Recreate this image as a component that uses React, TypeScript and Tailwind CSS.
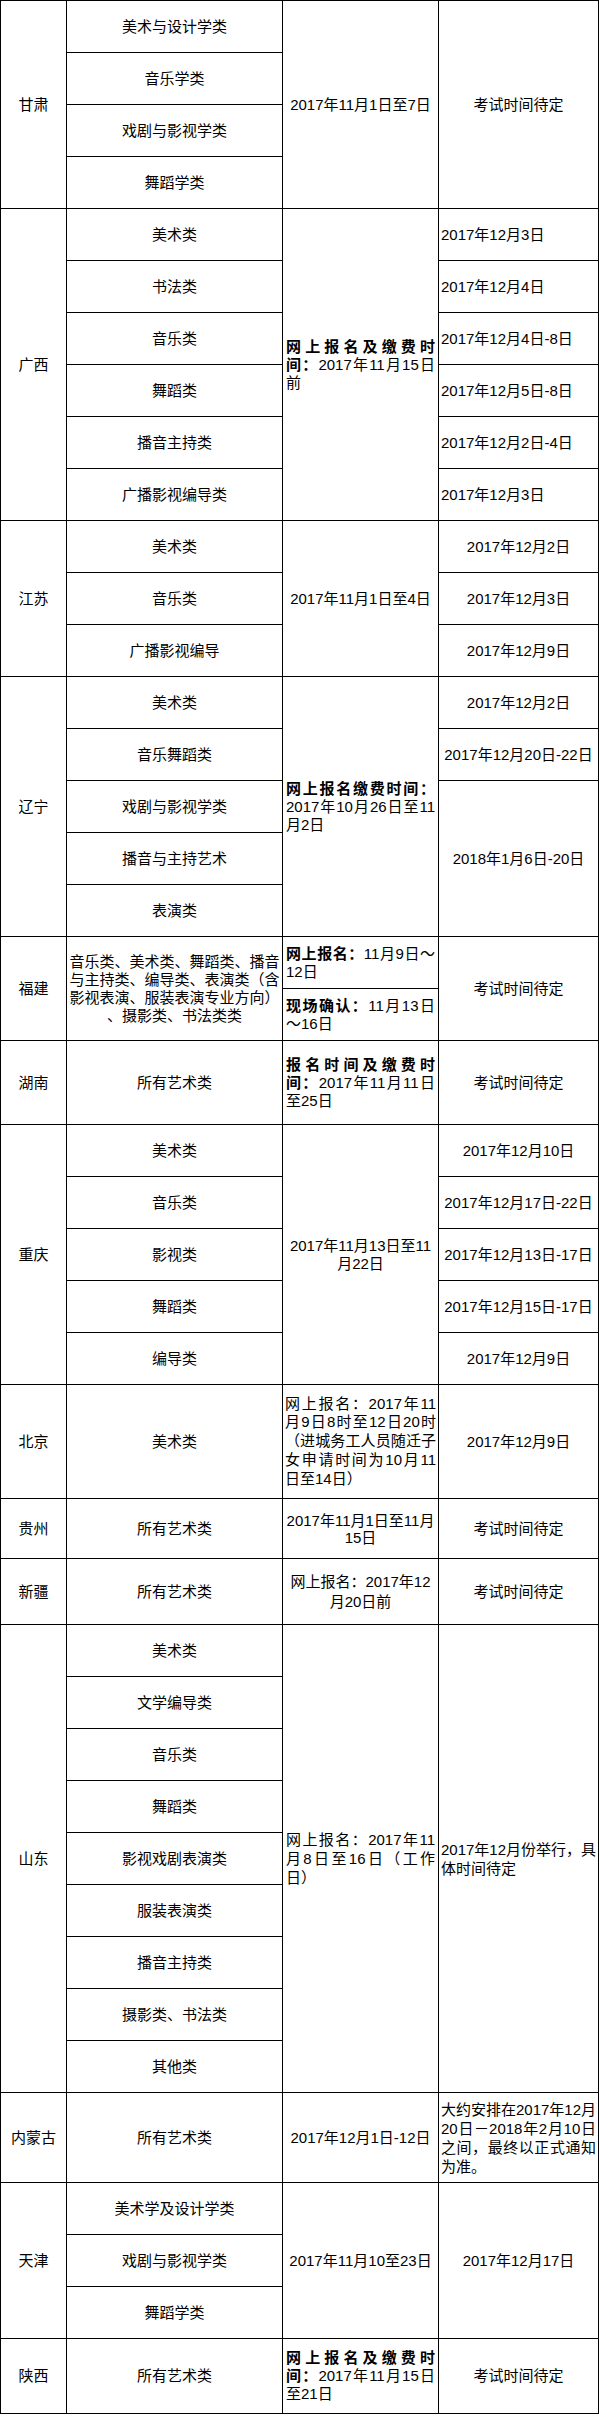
import React from 'react';

// common cell styles
const cell = 'bg-white flex items-center justify-center text-center';
const left = 'bg-white flex items-center text-left';

function Cats({ items }: { items: string[] }) {
    return (
        <div className="w-[215px] shrink-0 flex flex-col gap-px">
            {items.map((t) => (
                <div key={t} className={`h-[51px] ${cell}`}>{t}</div>
            ))}
        </div>
    );
}

function Dates({ items, align = 'center' }: { items: string[]; align?: 'center' | 'left' }) {
    return (
        <div className="w-[159px] shrink-0 flex flex-col gap-px">
            {items.map((t, i) => (
                <div key={i} className={`h-[51px] ${align === 'center' ? cell : left + ' pl-[2px]'}`}>{t}</div>
            ))}
        </div>
    );
}

// every line but the last is stretched to the full width
function Lines({ lines }: { lines: React.ReactNode[] }) {
    return (
        <div className="w-full">
            {lines.map((l, i) => (
                <div
                    key={i}
                    className={
                        i < lines.length - 1
                            ? 'whitespace-nowrap text-justify [text-align-last:justify]'
                            : 'whitespace-nowrap text-left'
                    }
                >
                    {l}
                </div>
            ))}
        </div>
    );
}

function Province({ name }: { name: string }) {
    return <div className={`w-[65px] shrink-0 ${cell}`}>{name}</div>;
}

function Reg({ children, justify }: { children: React.ReactNode; justify?: boolean }) {
    return (
        <div className={`w-[155px] shrink-0 ${justify ? left + ' px-[3px]' : cell}`}>{children}</div>
    );
}

function Exam({ children, className = '' }: { children: React.ReactNode; className?: string }) {
    return <div className={`w-[159px] shrink-0 ${cell} ${className}`}>{children}</div>;
}

export default function App() {
    return (
        <div className="w-[599px] min-h-[2417px] bg-white text-black text-[15px] leading-[18px] font-['Liberation_Sans','Noto_Sans_CJK_SC',sans-serif]">
            <div className="bg-black p-px flex flex-col gap-px">
                {/* 甘肃 */}
                <div className="flex gap-px">
                    <Province name="甘肃" />
                    <Cats items={['美术与设计学类', '音乐学类', '戏剧与影视学类', '舞蹈学类']} />
                    <Reg>2017年11月1日至7日</Reg>
                    <Exam>考试时间待定</Exam>
                </div>

                {/* 广西 */}
                <div className="flex gap-px">
                    <Province name="广西" />
                    <Cats items={['美术类', '书法类', '音乐类', '舞蹈类', '播音主持类', '广播影视编导类']} />
                    <Reg justify>
                        <Lines
                            lines={[
                                <b>网上报名及缴费时</b>,
                                <><b>间：</b>2017年11月15日</>,
                                '前',
                            ]}
                        />
                    </Reg>
                    <Dates
                        align="left"
                        items={['2017年12月3日', '2017年12月4日', '2017年12月4日-8日', '2017年12月5日-8日', '2017年12月2日-4日', '2017年12月3日']}
                    />
                </div>

                {/* 江苏 */}
                <div className="flex gap-px">
                    <Province name="江苏" />
                    <Cats items={['美术类', '音乐类', '广播影视编导']} />
                    <Reg>2017年11月1日至4日</Reg>
                    <Dates items={['2017年12月2日', '2017年12月3日', '2017年12月9日']} />
                </div>

                {/* 辽宁 */}
                <div className="flex gap-px">
                    <Province name="辽宁" />
                    <Cats items={['美术类', '音乐舞蹈类', '戏剧与影视学类', '播音与主持艺术', '表演类']} />
                    <Reg justify>
                        <Lines lines={[<b>网上报名缴费时间：</b>, '2017年10月26日至11', '月2日']} />
                    </Reg>
                    <div className="w-[159px] shrink-0 flex flex-col gap-px">
                        <div className={`h-[51px] ${cell}`}>2017年12月2日</div>
                        <div className={`h-[51px] ${cell}`}>2017年12月20日-22日</div>
                        <div className={`flex-1 ${cell}`}>2018年1月6日-20日</div>
                    </div>
                </div>

                {/* 福建 */}
                <div className="flex gap-px">
                    <Province name="福建" />
                    <div className={`w-[215px] shrink-0 ${cell} whitespace-nowrap`}>
                        <div>
                            音乐类、美术类、舞蹈类、播音<br />
                            与主持类、编导类、表演类（含<br />
                            影视表演、服装表演专业方向）<br />
                            、摄影类、书法类类
                        </div>
                    </div>
                    <div className="w-[155px] shrink-0 flex flex-col gap-px">
                        <div className={`h-[51px] ${left} px-[3px]`}>
                            <Lines lines={[<><b>网上报名：</b>11月9日～</>, '12日']} />
                        </div>
                        <div className={`h-[51px] ${left} px-[3px]`}>
                            <Lines lines={[<><b>现场确认：</b>11月13日</>, '～16日']} />
                        </div>
                    </div>
                    <Exam>考试时间待定</Exam>
                </div>

                {/* 湖南 */}
                <div className="flex gap-px h-[83px]">
                    <Province name="湖南" />
                    <div className={`w-[215px] shrink-0 ${cell}`}>所有艺术类</div>
                    <Reg justify>
                        <Lines
                            lines={[
                                <b>报名时间及缴费时</b>,
                                <><b>间：</b>2017年11月11日</>,
                                '至25日',
                            ]}
                        />
                    </Reg>
                    <Exam>考试时间待定</Exam>
                </div>

                {/* 重庆 */}
                <div className="flex gap-px">
                    <Province name="重庆" />
                    <Cats items={['美术类', '音乐类', '影视类', '舞蹈类', '编导类']} />
                    <Reg>
                        <div>
                            2017年11月13日至11<br />月22日
                        </div>
                    </Reg>
                    <Dates items={['2017年12月10日', '2017年12月17日-22日', '2017年12月13日-17日', '2017年12月15日-17日', '2017年12月9日']} />
                </div>

                {/* 北京 */}
                <div className="flex gap-px h-[113px]">
                    <Province name="北京" />
                    <div className={`w-[215px] shrink-0 ${cell}`}>美术类</div>
                    <div className={`w-[155px] shrink-0 ${left} px-[2px] leading-[18.7px]`}>
                        <Lines
                            lines={[
                                '网上报名：2017年11',
                                '月9日8时至12日20时',
                                '（进城务工人员随迁子',
                                '女申请时间为10月11',
                                '日至14日）',
                            ]}
                        />
                    </div>
                    <Exam>2017年12月9日</Exam>
                </div>

                {/* 贵州 */}
                <div className="flex gap-px h-[59px]">
                    <Province name="贵州" />
                    <div className={`w-[215px] shrink-0 ${cell}`}>所有艺术类</div>
                    <div className={`w-[155px] shrink-0 ${cell} leading-[17px]`}>
                        <div>
                            2017年11月1日至11月<br />15日
                        </div>
                    </div>
                    <Exam>考试时间待定</Exam>
                </div>

                {/* 新疆 */}
                <div className="flex gap-px h-[65px]">
                    <Province name="新疆" />
                    <div className={`w-[215px] shrink-0 ${cell}`}>所有艺术类</div>
                    <div className={`w-[155px] shrink-0 ${cell} leading-[20px]`}>
                        <div>
                            网上报名：2017年12<br />月20日前
                        </div>
                    </div>
                    <Exam>考试时间待定</Exam>
                </div>

                {/* 山东 */}
                <div className="flex gap-px">
                    <Province name="山东" />
                    <Cats
                        items={['美术类', '文学编导类', '音乐类', '舞蹈类', '影视戏剧表演类', '服装表演类', '播音主持类', '摄影类、书法类', '其他类']}
                    />
                    <div className={`w-[155px] shrink-0 ${left} px-[3px] leading-[19px]`}>
                        <Lines lines={['网上报名：2017年11', '月8日至16日（工作', '日）']} />
                    </div>
                    <div className={`w-[159px] shrink-0 ${left} px-[2px] leading-[19px]`}>
                        <Lines lines={['2017年12月份举行，具', '体时间待定']} />
                    </div>
                </div>

                {/* 内蒙古 */}
                <div className="flex gap-px h-[89px]">
                    <Province name="内蒙古" />
                    <div className={`w-[215px] shrink-0 ${cell}`}>所有艺术类</div>
                    <Reg>2017年12月1日-12日</Reg>
                    <div className={`w-[159px] shrink-0 ${left} px-[2px] leading-[19px]`}>
                        <Lines lines={['大约安排在2017年12月', '20日－2018年2月10日', '之间，最终以正式通知', '为准。']} />
                    </div>
                </div>

                {/* 天津 */}
                <div className="flex gap-px">
                    <Province name="天津" />
                    <Cats items={['美术学及设计学类', '戏剧与影视学类', '舞蹈学类']} />
                    <Reg>2017年11月10至23日</Reg>
                    <Exam>2017年12月17日</Exam>
                </div>

                {/* 陕西 */}
                <div className="flex gap-px h-[74px]">
                    <Province name="陕西" />
                    <div className={`w-[215px] shrink-0 ${cell}`}>所有艺术类</div>
                    <Reg justify>
                        <Lines
                            lines={[
                                <b>网上报名及缴费时</b>,
                                <><b>间：</b>2017年11月15日</>,
                                '至21日',
                            ]}
                        />
                    </Reg>
                    <Exam>考试时间待定</Exam>
                </div>
            </div>
        </div>
    );
}
